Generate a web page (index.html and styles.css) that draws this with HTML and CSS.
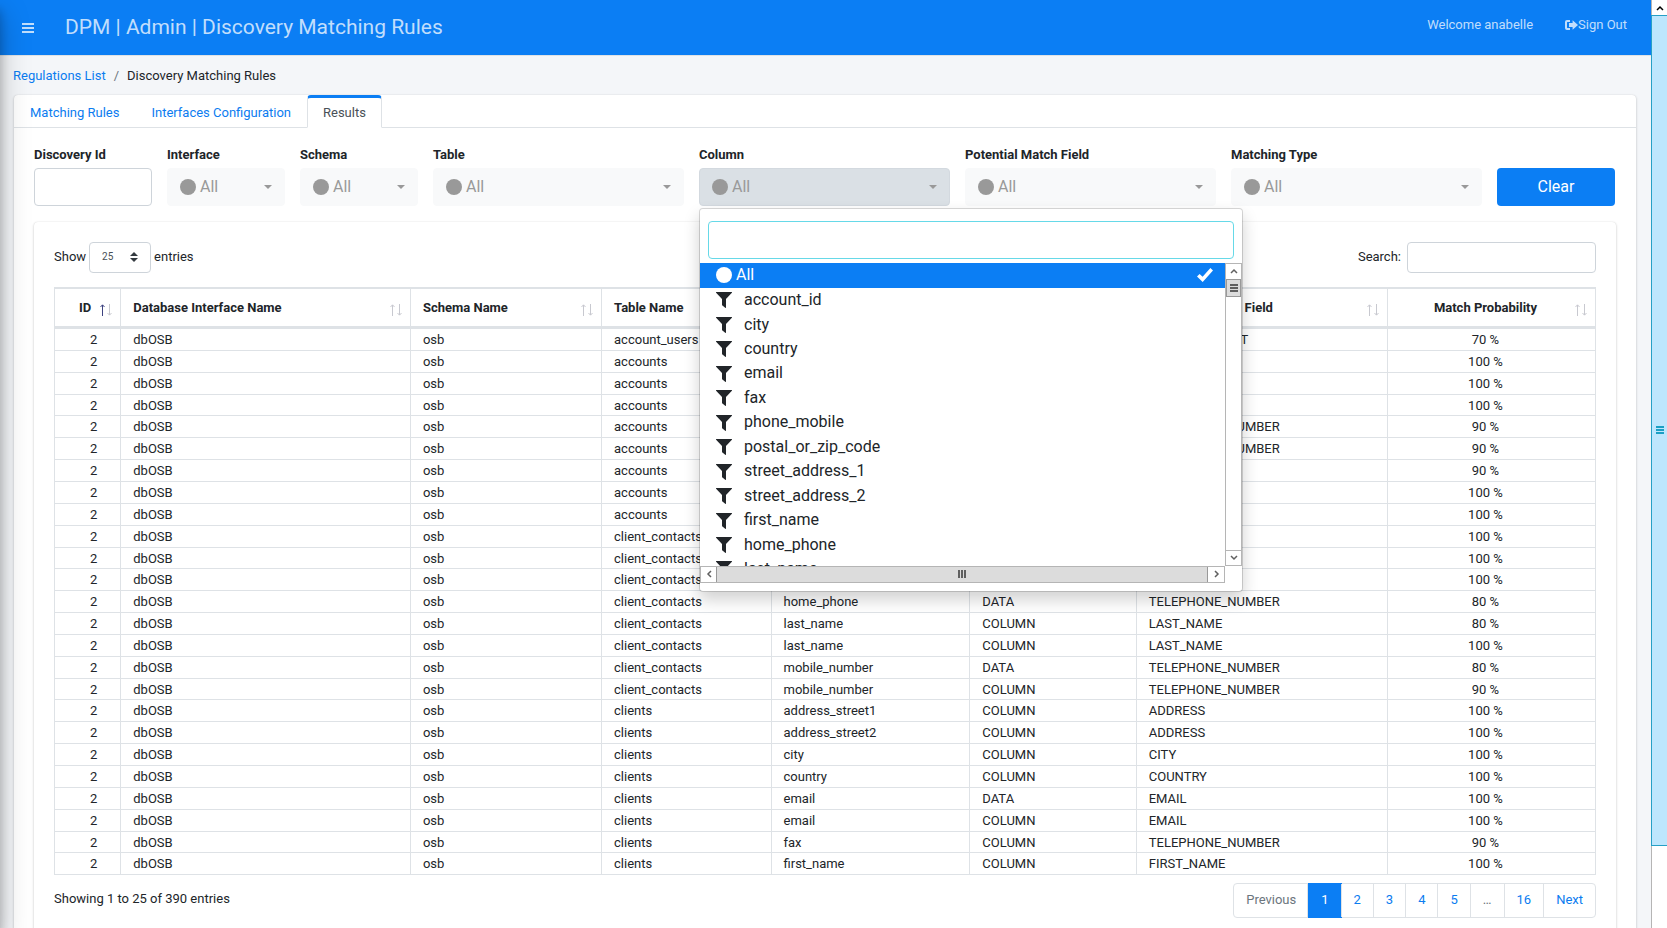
FILE: index.html
```
<!DOCTYPE html>
<html lang="en">
<head>
    <meta charset="UTF-8">
    <meta name="viewport" content="width=device-width, initial-scale=1.0">
    <title>DPM | Admin | Discovery Matching Rules</title>
    <link rel="stylesheet" href="styles.css">
</head>
<body>
    <svg class="sprite" aria-hidden="true">
        <symbol id="i-circle" viewBox="0 0 16 16"><circle cx="8" cy="8" r="8"/></symbol>
        <symbol id="i-filter" viewBox="0 0 16 16"><path d="M.4 0h15.2c.4 0 .5.4.3.7L10 7v8.5c0 .5-.4.6-.8.3L6.4 13.6c-.3-.2-.4-.4-.4-.8V7L.1.7C-.1.4 0 0 .4 0z"/></symbol>
        <symbol id="i-sort-up" viewBox="0 0 5 12"><path d="M2.5 12V1M.5 3l2-2.2 2 2.2"/></symbol>
        <symbol id="i-sort-down" viewBox="0 0 5 12"><path d="M2.500 0v11M.5 9l2 2.200 2-2.200"/></symbol>
    </svg>
    <aside class="sidebar"></aside>
    <div class="page">
        <header class="navbar">
            <button class="menu-btn" aria-label="Menu">
                <svg width="12" height="10" viewBox="0 0 12 10"><path d="M0 0h12v2H0zM0 4h12v2H0zM0 8h12v2H0z"/></svg>
            </button>
            <h1>DPM | Admin | Discovery Matching Rules</h1>
            <nav class="user-nav">
                <span>Welcome anabelle</span>
                <a href="#"><svg width="13" height="10" viewBox="0 0 13 10"><path d="M5 0v2H2.4q-.4 0-.4.4v5.200q0 .4.4.4H5v2H2Q0 10 0 8V2Q0 0 2 0zM7.600.3 13 5 7.600 9.700V7H4V3h3.600z"/></svg>Sign Out</a>
            </nav>
        </header>
        <nav class="breadcrumb">
            <a href="#">Regulations List</a><span class="sep">/</span><span>Discovery Matching Rules</span>
        </nav>
        <main class="card">
            <nav class="tabs">
                <a href="#">Matching Rules</a>
                <a href="#">Interfaces Configuration</a>
                <a href="#" class="active">Results</a>
            </nav>
            <form class="filters">
                <div class="field">
                    <label for="discovery">Discovery Id</label>
                    <input type="text" id="discovery" class="form-control">
                </div>
                <div class="field">
                    <label for="interface">Interface</label>
                    <button type="button" id="interface" class="picker"><svg><use href="#i-circle"/></svg>All</button>
                </div>
                <div class="field">
                    <label for="schema">Schema</label>
                    <button type="button" id="schema" class="picker"><svg><use href="#i-circle"/></svg>All</button>
                </div>
                <div class="field wide">
                    <label for="table">Table</label>
                    <button type="button" id="table" class="picker"><svg><use href="#i-circle"/></svg>All</button>
                </div>
                <div class="field wide">
                    <label for="column">Column</label>
                    <button type="button" id="column" class="picker open"><svg><use href="#i-circle"/></svg>All</button>
                    <div class="dropdown">
                        <input type="text" class="form-control" aria-label="Search column">
                        <div class="list-area">
                            <ul class="options">
                                <li class="selected">
                                    <svg><use href="#i-circle"/></svg>All
                                    <svg class="check" viewBox="0 0 16 14"><path d="M0 8.500 2.600 6l3 2.700L13.400 0 16 2.500 5.700 14z"/></svg>
                                </li>
                            </ul>
                            <div class="scroll-v">
                                <span class="arrow"><svg viewBox="0 0 8 8"><path d="M1 6l3-3 3 3"/></svg></span>
                                <span class="thumb"><svg viewBox="0 0 8 8"><path d="M0 1h8M0 4h8M0 7h8"/></svg></span>
                                <span class="arrow last"><svg viewBox="0 0 8 8"><path d="M1 2l3 3 3-3"/></svg></span>
                            </div>
                            <div class="scroll-h">
                                <span class="arrow"><svg viewBox="0 0 8 8"><path d="M6 1L3 4l3 3"/></svg></span>
                                <span class="thumb"><svg viewBox="0 0 8 8"><path d="M1 0v8M4 0v8M7 0v8"/></svg></span>
                                <span class="arrow"><svg viewBox="0 0 8 8"><path d="M2 1l3 3-3 3"/></svg></span>
                            </div>
                        </div>
                    </div>
                </div>
                <div class="field wide">
                    <label for="match">Potential Match Field</label>
                    <button type="button" id="match" class="picker"><svg><use href="#i-circle"/></svg>All</button>
                </div>
                <div class="field wide">
                    <label for="type">Matching Type</label>
                    <button type="button" id="type" class="picker"><svg><use href="#i-circle"/></svg>All</button>
                </div>
                <button type="button" class="clear-btn">Clear</button>
            </form>
            <section class="results">
                <div class="toolbar">
                    <label class="length">Show
                        <span class="select-wrap">
                            <select><option>25</option></select>
                            <svg width="8" height="10" viewBox="0 0 8 10"><path d="M0 4l4-4 4 4zM0 6l4 4 4-4z"/></svg>
                        </span>
                        entries</label>
                    <label class="search">Search: <input type="search"></label>
                </div>
                <table>
                    <colgroup>
                        <col class="c-id"><col class="c-db"><col class="c-schema"><col class="c-table">
                        <col class="c-column"><col class="c-type"><col class="c-match"><col class="c-prob">
                    </colgroup>
                    <thead>
                        <tr>
                            <th class="sorted">ID</th>
                            <th>Database Interface Name</th>
                            <th>Schema Name</th>
                            <th>Table Name</th>
                            <th>Column Name</th>
                            <th>Matching Type</th>
                            <th>Potential Match Field</th>
                            <th>Match Probability</th>
                        </tr>
                    </thead>
                    <tbody></tbody>
                </table>
                <div class="table-footer">
                    <span class="info">Showing 1 to 25 of 390 entries</span>
                    <ul class="pagination">
                        <li class="muted"><a href="#">Previous</a></li>
                        <li class="active"><a href="#">1</a></li>
                        <li><a href="#">2</a></li>
                        <li><a href="#">3</a></li>
                        <li><a href="#">4</a></li>
                        <li><a href="#">5</a></li>
                        <li class="muted"><a href="#">…</a></li>
                        <li><a href="#">16</a></li>
                        <li><a href="#">Next</a></li>
                    </ul>
                </div>
            </section>
        </main>
    </div>
    <div class="page-scroll">
        <span class="arrow"><svg viewBox="0 0 8 8"><path d="M1 6l3-3 3 3"/></svg></span>
        <span class="thumb"><svg viewBox="0 0 8 8"><path d="M0 1h8M0 4h8M0 7h8"/></svg></span>
    </div>
    <script>
        const columns = ['account_id', 'city', 'country', 'email', 'fax', 'phone_mobile', 'postal_or_zip_code',
            'street_address_1', 'street_address_2', 'first_name', 'home_phone', 'last_name'];
        // table, column, matching type, match field, probability
        const rows = [
            ['account_users', 'account_id', 'DATA', 'BANK_ACCOUNT', 70],
            ['accounts', 'city', 'COLUMN', 'CITY', 100],
            ['accounts', 'country', 'COLUMN', 'COUNTRY', 100],
            ['accounts', 'email', 'COLUMN', 'EMAIL', 100],
            ['accounts', 'fax', 'COLUMN', 'TELEPHONE_NUMBER', 90],
            ['accounts', 'phone_mobile', 'COLUMN', 'TELEPHONE_NUMBER', 90],
            ['accounts', 'postal_or_zip_code', 'COLUMN', 'ZIP_CODE', 90],
            ['accounts', 'street_address_1', 'COLUMN', 'ADDRESS', 100],
            ['accounts', 'street_address_2', 'COLUMN', 'ADDRESS', 100],
            ['client_contacts', 'email', 'DATA', 'EMAIL', 100],
            ['client_contacts', 'email', 'COLUMN', 'EMAIL', 100],
            ['client_contacts', 'first_name', 'COLUMN', 'FIRST_NAME', 100],
            ['client_contacts', 'home_phone', 'DATA', 'TELEPHONE_NUMBER', 80],
            ['client_contacts', 'last_name', 'COLUMN', 'LAST_NAME', 80],
            ['client_contacts', 'last_name', 'COLUMN', 'LAST_NAME', 100],
            ['client_contacts', 'mobile_number', 'DATA', 'TELEPHONE_NUMBER', 80],
            ['client_contacts', 'mobile_number', 'COLUMN', 'TELEPHONE_NUMBER', 90],
            ['clients', 'address_street1', 'COLUMN', 'ADDRESS', 100],
            ['clients', 'address_street2', 'COLUMN', 'ADDRESS', 100],
            ['clients', 'city', 'COLUMN', 'CITY', 100],
            ['clients', 'country', 'COLUMN', 'COUNTRY', 100],
            ['clients', 'email', 'DATA', 'EMAIL', 100],
            ['clients', 'email', 'COLUMN', 'EMAIL', 100],
            ['clients', 'fax', 'COLUMN', 'TELEPHONE_NUMBER', 90],
            ['clients', 'first_name', 'COLUMN', 'FIRST_NAME', 100]
        ];
        const list = document.querySelector('.options');
        columns.forEach(name => {
            const li = document.createElement('li');
            li.innerHTML = `<svg><use href="#i-filter"/></svg><span class="name">${name}</span>`;
            list.appendChild(li);
        });
        document.querySelectorAll('th').forEach(th => {
            th.innerHTML += '<span class="sort"><svg class="up"><use href="#i-sort-up"/></svg><svg><use href="#i-sort-down"/></svg></span>';
        });
        const body = document.querySelector('tbody');
        rows.forEach(r => {
            const tr = document.createElement('tr');
            tr.innerHTML = `<td>2</td><td>dbOSB</td><td>osb</td><td>${r[0]}</td><td>${r[1]}</td><td>${r[2]}</td><td>${r[3]}</td><td>${r[4]} %</td>`;
            body.appendChild(tr);
        });
    </script>
</body>
</html>
```
FILE: styles.css
```
* {
    margin: 0;
    padding: 0;
    box-sizing: border-box;
}
body {
    display: flex;
    height: 100vh;
    overflow: hidden;
    font-family: Roboto, "Liberation Sans", sans-serif;
    font-size: 13px;
    line-height: 1.6;
    color: #212529;
    background: #f4f6f9;
}
a {
    color: #0b7cf0;
    text-decoration: none;
}
ul {
    list-style: none;
}
button, input, select {
    font: inherit;
}
svg {
    fill: currentColor;
    flex: none;
}
.sprite {
    position: absolute;
    width: 0;
    height: 0;
}
.sidebar {
    position: fixed;
    top: 0;
    bottom: 0;
    left: -250px;
    width: 250px;
    z-index: 10;
    box-shadow: 0 14px 28px rgba(0, 0, 0, 0.25), 0 10px 10px rgba(0, 0, 0, 0.22);
}
.page {
    flex: 1;
    min-width: 0;
}

/* top bar */
.navbar {
    display: flex;
    align-items: center;
    height: 56px;
    padding: 0 24px 0 22px;
    background: #0b7ef4;
    border-bottom: 1px solid #dee2e6;
    color: rgba(255, 255, 255, 0.75);
}
.menu-btn {
    display: flex;
    border: 0;
    background: none;
    color: inherit;
}
.navbar h1 {
    margin-left: 31px;
    font-size: 21px;
    font-weight: 400;
}
.user-nav {
    display: flex;
    gap: 32px;
    margin: 0 0 4px auto;
}
.user-nav a {
    display: flex;
    align-items: center;
    color: inherit;
}
.breadcrumb {
    padding: 10px 13px 8px;
}
.breadcrumb .sep {
    margin: 0 8px;
    color: #6c757d;
}

/* tabs */
.card {
    min-height: 100vh;
    margin: 0 15px 0 14px;
    background: #fff;
    border-radius: 4px;
    box-shadow: 0 0 1px rgba(0, 0, 0, 0.13), 0 1px 3px rgba(0, 0, 0, 0.2);
}
.tabs {
    display: flex;
    height: 33px;
    border-bottom: 1px solid #dee2e6;
}
.tabs a {
    height: 33px;
    padding: 5px 15px 3px;
    border: 1px solid transparent;
    border-top-width: 3px;
    border-radius: 4px 4px 0 0;
}
.tabs .active {
    background: #fff;
    border-color: #0b7ef4 #dee2e6 transparent;
    color: #495057;
}

/* filters */
.filters {
    display: grid;
    grid-template-columns: repeat(12, 1fr);
    gap: 15px;
    align-items: end;
    padding: 17px 21px 16px 20px;
}
.field {
    position: relative;
}
.field.wide {
    grid-column: span 2;
}
.field label {
    display: block;
    margin-bottom: 2px;
    font-weight: 700;
}
.form-control {
    display: block;
    width: 100%;
    height: 38px;
    padding: 0 12px;
    border: 1px solid #ced4da;
    border-radius: 4px;
}
.picker {
    display: flex;
    align-items: center;
    gap: 4px;
    width: 100%;
    height: 38px;
    padding: 0 12px;
    border: 1px solid #f8f9fa;
    border-radius: 4px;
    background: #f8f9fa;
    color: #999;
    font-size: 16px;
}
.picker svg, .options svg {
    width: 16px;
    height: 16px;
}
.picker::after {
    content: "";
    margin-left: auto;
    border: 4px solid transparent;
    border-top-color: currentColor;
    border-bottom: 0;
}
.picker.open {
    background: #dae0e5;
    border-color: #d3d9df;
}
.clear-btn {
    height: 38px;
    border: 0;
    border-radius: 4px;
    background: #0b7ef4;
    color: #fff;
    font-size: 16px;
}

/* column drop-down */
.dropdown {
    position: absolute;
    z-index: 5;
    top: 100%;
    left: 0;
    width: 544px;
    margin-top: 2px;
    padding: 12px 0 8px;
    border: 1px solid rgba(0, 0, 0, 0.15);
    border-radius: 4px;
    background: #fff;
    background-clip: padding-box;
    box-shadow: 0 8px 16px rgba(0, 0, 0, 0.18);
}
.dropdown .form-control {
    width: auto;
    min-width: calc(100% - 16px);
    margin: 0 8px 4px;
    border-color: #66d9e8;
    outline: 0;
}
.list-area {
    display: grid;
    grid-template-columns: 1fr 17px;
}
.options {
    height: 303px;
    overflow: hidden;
    font-size: 16px;
    line-height: 1.53;
}
.options li {
    display: flex;
    align-items: center;
    gap: 4px;
    padding: 0 12px 0 16px;
}
.options .name {
    margin-left: 8px;
}
.options .selected {
    padding-bottom: 1px;
    background: #0b7ef4;
    color: #fff;
}
.options .check {
    height: 14px;
    margin-left: auto;
}
.scroll-v, .scroll-h {
    display: flex;
    border: 1px solid #b5b5b5;
    background: #fff;
}
.scroll-v {
    flex-direction: column;
}
.scroll-v .arrow, .scroll-h .arrow, .scroll-v .thumb, .scroll-h .thumb, .page-scroll span {
    display: flex;
    align-items: center;
    justify-content: center;
    color: #606060;
}
.arrow {
    width: 15px;
    height: 15px;
}
.arrow svg, .thumb svg {
    width: 8px;
    height: 8px;
    fill: none;
    stroke: currentColor;
    stroke-width: 2;
}
.arrow svg {
    stroke-width: 1.5;
}
.scroll-v .thumb {
    height: 18px;
    border: 1px solid #999;
    background: #dcdcdc;
}
.scroll-v .last {
    margin-top: auto;
    border-top: 1px solid #b5b5b5;
}
.scroll-h .thumb {
    flex: 1;
    margin-right: 1px;
    border: 1px solid #999;
    border-width: 0 1px;
    background: #dcdcdc;
}

/* results */
.results {
    margin: 0 20px;
    padding: 20px 20px;
    border-radius: 4px;
    box-shadow: 0 0 1px rgba(0, 0, 0, 0.13), 0 1px 3px rgba(0, 0, 0, 0.2);
}
.toolbar, .table-footer {
    display: flex;
    justify-content: space-between;
    align-items: center;
}
.length, .search {
    display: flex;
    align-items: center;
    gap: 3px;
}
.search {
    gap: 6px;
}
.search input {
    width: 189px;
    height: 31px;
    padding: 0 8px;
    border: 1px solid #ced4da;
    border-radius: 4px;
}
.select-wrap {
    display: grid;
    align-items: center;
}
.select-wrap select, .select-wrap svg {
    grid-area: 1 / 1;
}
.select-wrap select {
    width: 62px;
    height: 31px;
    padding: 0 12px;
    border: 1px solid #ced4da;
    border-radius: 4px;
    background: #fff;
    color: #495057;
    font-size: 10px;
    appearance: none;
}
.select-wrap svg {
    justify-self: end;
    margin-right: 13px;
    color: #343a40;
    pointer-events: none;
}
table {
    width: 100%;
    margin: 14px 0 8px;
    border-collapse: collapse;
    table-layout: fixed;
    line-height: 1.45;
}
.c-id { width: 4.3%; }
.c-db { width: 18.8%; }
.c-schema { width: 12.4%; }
.c-table { width: 11%; }
.c-column { width: 12.9%; }
.c-type { width: 10.8%; }
.c-match { width: 16.3%; }
.c-prob { width: 13.5%; }
th, td {
    padding: 2px 12px 0;
    border: 1px solid #dee2e6;
    text-align: left;
    white-space: nowrap;
}
th {
    position: relative;
    height: 40px;
    border-top-width: 2px;
    border-bottom-width: 3px;
}
th:first-child, td:first-child {
    padding-left: 24px;
}
td:first-child {
    text-align: center;
}
th:first-child {
    padding-right: 0;
}
th:last-child, td:last-child {
    padding-right: 24px;
    text-align: center;
}
.sort {
    position: absolute;
    display: flex;
    gap: 2px;
    right: 8px;
    bottom: 10px;
}
.sort svg {
    width: 5px;
    height: 12px;
    fill: none;
    stroke: #c8c9d0;
    stroke-width: 1;
}
.sorted .sort .up {
    stroke: #3d4380;
}
.info {
    margin-bottom: 3px;
}
.pagination {
    display: flex;
    border: 1px solid #dee2e6;
    border-radius: 4px;
}
.pagination a {
    display: block;
    padding: 6px 12px;
}
.pagination li + li {
    border-left: 1px solid #dee2e6;
}
.pagination .active {
    margin: -1px;
    padding: 1px;
    background: #0b7ef4;
}
.pagination .active a {
    color: #fff;
}
.pagination .muted a {
    color: #6c757d;
}

/* window scroll bar */
.page-scroll {
    display: flex;
    flex-direction: column;
    width: 16px;
    border-left: 1px solid #b5b5b5;
    background: #fff;
}
.page-scroll .arrow {
    color: #000;
}
.page-scroll .thumb {
    width: 16px;
    height: 89.5%;
    margin-left: -1px;
    border: 1px solid #26a0c6;
    border-right: 0;
    background: #bde6fd;
    color: #1a9fc4;
}
```
